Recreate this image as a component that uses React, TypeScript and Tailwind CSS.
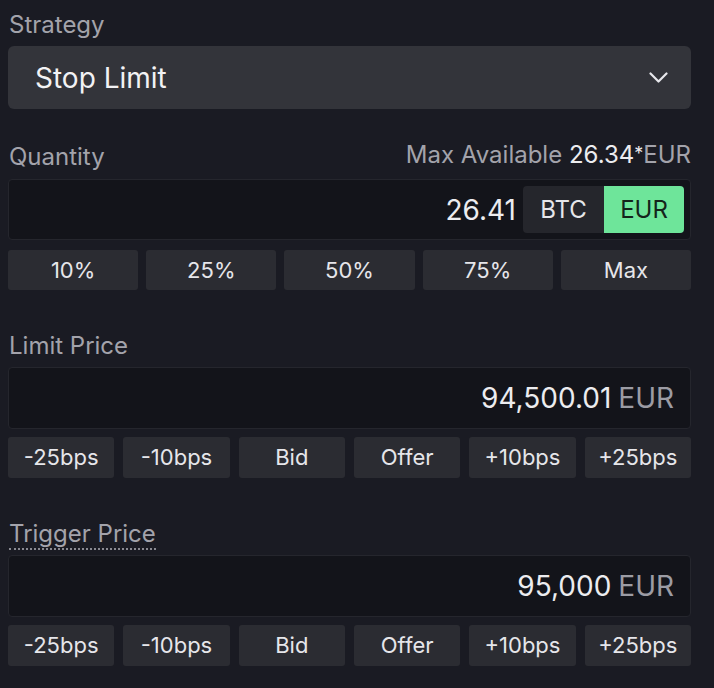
import React from "react";

const font = { fontFamily: "Inter, 'Noto Sans', sans-serif" };

function Btn({ children }: { children: React.ReactNode }) {
  return (
    <div className="flex flex-1 items-center justify-center rounded-[3px] bg-[#2b2c32] text-[22px] text-[#e6e6ea]">
      {children}
    </div>
  );
}

function BpsRow() {
  return (
    <div className="mt-[8px] flex h-[41px] gap-[9px]">
      {["-25bps", "-10bps", "Bid", "Offer", "+10bps", "+25bps"].map((t) => (
        <Btn key={t}>{t}</Btn>
      ))}
    </div>
  );
}

function PriceInput({ value }: { value: string }) {
  return (
    <div className="flex h-[62px] items-center justify-end rounded-[4px] border border-[#25262d] bg-[#13141a] pr-[16px] text-[28px]">
      <span className="text-[#ececef]">{value}</span>
      <span className="ml-[7px] text-[#9c9ca4]">EUR</span>
    </div>
  );
}

export default function App() {
  return (
    <div className="h-[688px] w-[714px] bg-[#1a1b23] pl-[8px] pr-[23px] pt-[9px]" style={font}>
      <div className="pl-[1px] text-[24px] leading-[32px] text-[#a3a3ab]">Strategy</div>
      <div className="mt-[5px] flex h-[63px] items-center justify-between rounded-[6px] bg-[#33343a] pl-[27px] pr-[23px]">
        <span className="text-[28px] text-[#f2f2f4]">Stop Limit</span>
        <svg width="19" height="11" viewBox="0 0 19 11" fill="none">
          <path d="M1.5 1.5l8 8 8-8" stroke="#e8e8ec" strokeWidth="2.2" strokeLinecap="round" strokeLinejoin="round" />
        </svg>
      </div>

      <div className="mt-[30px] flex items-end justify-between pl-[1px] text-[24px] leading-[32px]">
        <span className="text-[#a3a3ab]">Quantity</span>
        <span className="text-[#a3a3ab]">
          Max Available <span className="text-[#ececef]">26.34</span>
          <span className="relative top-[-3px] text-[18px] text-[#ececef]">*</span>EUR
        </span>
      </div>
      <div className="mt-[6px] flex h-[61px] items-center justify-end rounded-[4px] border border-[#25262d] bg-[#13141a] pr-[6px]">
        <span className="mr-[7px] text-[28px] text-[#ececef]">26.41</span>
        <div className="flex h-[47px] overflow-hidden rounded-[4px]">
          <div className="flex w-[81px] items-center justify-center bg-[#25262c] text-[24px] text-[#e6e6ea]">BTC</div>
          <div className="flex w-[80px] items-center justify-center bg-[#6ee59a] text-[24px] text-[#14241a]">EUR</div>
        </div>
      </div>
      <div className="mt-[10px] flex h-[40px] gap-[8px]">
        {["10%", "25%", "50%", "75%", "Max"].map((t) => (
          <Btn key={t}>{t}</Btn>
        ))}
      </div>

      <div className="mt-[40px] pl-[1px] text-[24px] leading-[32px] text-[#a3a3ab]">Limit Price</div>
      <div className="mt-[5px]">
        <PriceInput value="94,500.01" />
      </div>
      <BpsRow />

      <div className="mt-[40px] pl-[1px] text-[24px] leading-[32px] text-[#a3a3ab]">
        <span className="border-b-2 border-dotted border-[#8a8a92]">Trigger Price</span>
      </div>
      <div className="mt-[5px]">
        <PriceInput value="95,000" />
      </div>
      <BpsRow />
    </div>
  );
}
